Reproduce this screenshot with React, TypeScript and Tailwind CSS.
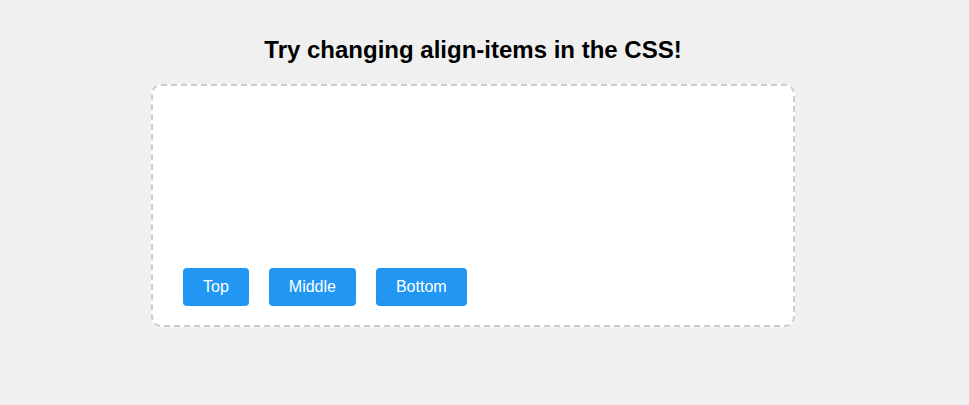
const App = () => {
  return (
    <div className="min-h-[405px] w-full bg-[#f0f0f0] font-['Liberation_Sans',Arial,sans-serif]">
      <div className="ml-[151px] w-[644px] pt-[35px]">
        <h2 className="text-center text-[24px] font-bold leading-[30px] text-black">
          Try changing align-items in the CSS!
        </h2>
        <div className="mt-[19px] flex h-[243px] items-end gap-5 rounded-[10px] border-2 border-dashed border-[#cccccc] bg-white pb-[19px] pl-[30px]">
          <button className="h-[38px] rounded bg-[#2196f3] px-5 text-[16px] text-white">Top</button>
          <button className="h-[38px] rounded bg-[#2196f3] px-5 text-[16px] text-white">Middle</button>
          <button className="h-[38px] rounded bg-[#2196f3] px-5 text-[16px] text-white">Bottom</button>
        </div>
      </div>
    </div>
  );
};

export default App;
